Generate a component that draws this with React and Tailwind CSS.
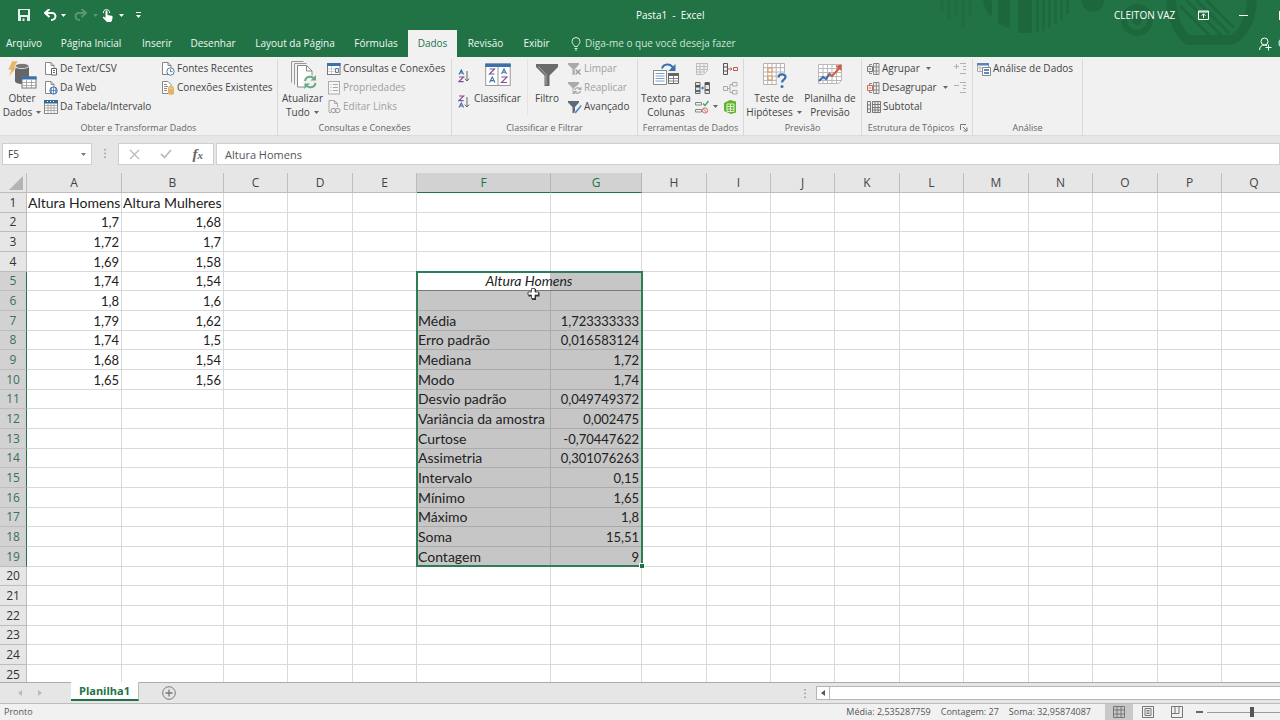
import React from "react";

const UI = "font-['Open_Sans','Noto_Sans',sans-serif]";
const CELL = "font-['Lato','Noto_Sans',sans-serif]";

/* ---------- icons ---------- */
const Caret = ({ className = "" }) => (
  <svg viewBox="0 0 5 3" className={"inline-block h-[3px] w-[5px] shrink-0 " + className}>
    <path d="M0 0h5L2.5 3z" fill="currentColor" />
  </svg>
);

function Ico({ w = 14, h = 14, children, cls = "h-3.5 w-3.5" }) {
  return (
    <svg viewBox={`0 0 ${w} ${h}`} className={"shrink-0 " + cls} fill="none">
      {children}
    </svg>
  );
}

const page = "M1.5.5h5.5l3 3v9h-8.500z";

const GetDataIcon = () => (
  <Ico w={30} h={30} cls="h-[30px] w-[30px]">
    <path d="M8 6v15c0 4 14 4 14 0V6z" fill="#666" />
    <ellipse cx="15" cy="6" rx="7" ry="2.600" fill="#777" stroke="#f1f1f1" strokeWidth=".8" />
    <path d="M5 1h6L7.500 7H10L1.500 17l2.500-7H1z" fill="#e8b765" stroke="#f1f1f1" strokeWidth=".5" />
    <rect x="15" y="17" width="14" height="11" fill="#fff" stroke="#777" />
    <path d="M14.500 16.500h15v3h-15z" fill="#3c6fae" />
    <path d="M15 22.500h14M15 25.500h14M19.500 20v8M24.500 20v8" stroke="#999" strokeWidth=".8" />
  </Ico>
);
const TextCsvIcon = () => (
  <Ico>
    <path d={page} fill="#fff" stroke="#888" />
    <path d="M7 .5v3h3" stroke="#888" />
    <path d="M7.500 6.500h5v6.500h-5z" fill="#fff" stroke="#666" />
    <path d="M9 8.500h2M9 10.500h2" stroke="#666" />
  </Ico>
);
const WebIcon = () => (
  <Ico>
    <path d={page} fill="#fff" stroke="#888" />
    <path d="M7 .5v3h3" stroke="#888" />
    <circle cx="9.500" cy="9.500" r="3.700" fill="#fff" stroke="#3c6fae" />
    <path d="M6 9.500h7M9.500 6v7M8 6.500c-1 2-1 4 0 6M11 6.500c1 2 1 4 0 6" stroke="#3c6fae" strokeWidth=".7" />
  </Ico>
);
const TableIcon = () => (
  <Ico>
    <rect x=".5" y=".5" width="13" height="13" fill="#fff" stroke="#888" />
    <path d="M0 0h14v3.500H0z" fill="#2f6b96" />
    <path d="M1 5.500h12M1 8h12M1 10.500h12M4 3.500v10M7 3.500v10M10 3.500v10" stroke="#999" strokeWidth=".8" />
    <path d="M3 1.500h1M6 1.500h1M9 1.500h1" stroke="#fff" />
  </Ico>
);
const RecentIcon = () => (
  <Ico>
    <path d={page} fill="#fff" stroke="#888" />
    <path d="M7 .5v3h3" stroke="#888" />
    <circle cx="9.500" cy="9.500" r="3.700" fill="#fff" stroke="#5577a5" />
    <path d="M9.500 7.300v2.400h2" stroke="#5577a5" />
  </Ico>
);
const ExistingIcon = () => (
  <Ico>
    <path d={page} fill="#fff" stroke="#888" />
    <path d="M3 3.500h3M3 5.500h4M3 7.500h3M3 9.500h3" stroke="#888" />
    <path d="M7 6.500c0-2 6-2 6 0v6c0 1.700-6 1.700-6 0z" fill="#e3b469" />
    <path d="M7.500 6.500c0 1.200 5 1.200 5 0" stroke="#f6dca9" strokeWidth=".7" />
  </Ico>
);
const RefreshAllIcon = () => (
  <Ico w={30} h={30} cls="h-[30px] w-[30px]">
    <path d="M3.500 22.500v-21h12M6.500 24.500v-21h12" stroke="#999" />
    <path d="M9.500 5.500h9l5.500 5.500v16H9.500z" fill="#fff" stroke="#888" />
    <path d="M18.500 5.500v5.500h5.500" stroke="#888" />
    <circle cx="22" cy="22" r="7" fill="#f1f1f1" />
    <path d="M17 21c.5-3 3-4.500 5.500-4.300 1.800.1 3 1 4 2.300M27.500 23c-.5 3-3 4.500-5.500 4.300-1.800-.1-3-1-4-2.300" stroke="#6aa888" strokeWidth="2" />
    <path d="M28 15v5.500h-5.500zM16.500 29v-5.500H22z" fill="#6aa888" />
  </Ico>
);
const QueriesIcon = () => (
  <Ico>
    <rect x=".5" y="1.500" width="12.500" height="11" fill="#fff" stroke="#777" />
    <path d="M0 1h13.500v3H0z" fill="#3c6fae" />
    <path d="M1 7h7M1 9.500h7M4.500 4v8" stroke="#bbb" strokeWidth=".7" />
    <path d="M8.500 6.500h3v4h-3z" fill="#e7eef7" stroke="#5f7fa8" />
  </Ico>
);
const PropsIcon = () => (
  <Ico>
    <rect x="1.500" y=".5" width="11" height="12.500" fill="#f7f7f7" stroke="#aaa" />
    <path d="M3.500 3.500h1M3.500 6.500h1M3.500 9.500h1M6 3.500h5M6 6.500h5M6 9.500h5" stroke="#aaa" />
  </Ico>
);
const LinksIcon = () => (
  <Ico>
    <path d="M2 12V.5h5.500l3 3V7" stroke="#aaa" />
    <path d="M7.500.5v3h3M2 12.500h2" stroke="#aaa" />
    <rect x="4" y="8.500" width="5" height="4" rx="2" stroke="#999" />
    <rect x="8" y="8.500" width="5" height="4" rx="2" stroke="#999" />
  </Ico>
);

const Glyph = ({ kind, x, y, s = 5, c }) =>
  kind === "A" ? (
    <path d={`M${x} ${y + s}L${x + s / 2} ${y}L${x + s} ${y + s}M${x + s * 0.2} ${y + s * 0.65}h${s * 0.6}`} stroke={c} strokeWidth="1.100" />
  ) : (
    <path d={`M${x} ${y}h${s}L${x} ${y + s}h${s}`} stroke={c} strokeWidth="1.100" />
  );
const SortIcon = ({ up }) => (
  <Ico w={12} h={14} cls="h-3.5 w-3">
    <Glyph kind={up ? "A" : "Z"} x={1} y={1} s={4.6} c={up ? "#3c6fae" : "#7f4f93"} />
    <Glyph kind={up ? "Z" : "A"} x={1} y={8} s={4.6} c={up ? "#7f4f93" : "#3c6fae"} />
    <path d="M9 2v10M6.800 9.600L9 12l2.200-2.400" stroke="#666" />
  </Ico>
);
const SortBigIcon = () => (
  <Ico w={26} h={24} cls="h-6 w-[26px]">
    <rect x=".7" y="1" width="24.500" height="21.500" fill="#fff" stroke="#999" />
    <path d="M.2.500h25.500v3.500H.2z" fill="#3c6fae" />
    <path d="M13 4v18.500" stroke="#999" />
    <Glyph kind="Z" x={4.500} y={6} s={5} c="#7f4f93" />
    <Glyph kind="A" x={4.500} y={14} s={5.500} c="#3c6fae" />
    <Glyph kind="A" x={16.500} y={6} s={5} c="#3c6fae" />
    <Glyph kind="Z" x={16.500} y={14} s={5.500} c="#7f4f93" />
  </Ico>
);
const FilterBigIcon = () => (
  <Ico w={24} h={24} cls="h-6 w-6">
    <path d="M1 1h22v3l-8.500 8.500V23h-5V12.500L1 4z" fill="#6b6b6b" />
    <path d="M3.500 3.500l7.500 8V22" stroke="#aaa" />
  </Ico>
);
const SmallFilter = ({ c, children }) => (
  <Ico>
    <path d="M0 1h11v1.500L7 7v6H4.500V7L0 2.500z" fill={c} />
    {children}
  </Ico>
);
const ClearIcon = () => (
  <SmallFilter c="#aaa">
    <path d="M7 7l6 6M13 7l-6 6" stroke="#f1f1f1" strokeWidth="3" />
    <path d="M7.500 7.500l5 5M12.500 7.500l-5 5" stroke="#999" strokeWidth="1.400" />
  </SmallFilter>
);
const ReapplyIcon = () => (
  <SmallFilter c="#aaa">
    <circle cx="9.500" cy="9.500" r="4.200" fill="#f1f1f1" />
    <path d="M6.800 9c.5-2.500 4-3 5.200-1M12.500 10c-.5 2.500-4 3-5.200 1" stroke="#aaa" strokeWidth="1.300" />
    <path d="M13.500 5.500V9H10zM5.800 13.500V10h3.500z" fill="#aaa" />
  </SmallFilter>
);
const AdvancedIcon = () => (
  <SmallFilter c="#5d6b76">
    <path d="M13 4.500l-6 7-1 2.500 2.500-1 5.500-7z" fill="#3c7fc0" stroke="#f1f1f1" strokeWidth=".6" />
  </SmallFilter>
);
const TextColsIcon = () => (
  <Ico w={28} h={26} cls="h-[26px] w-7">
    <path d="M1.500 8.500h13v14h-13z" fill="#fff" stroke="#888" />
    <path d="M3.500 11.500h9M3.500 14h9M3.500 16.500h9M3.500 19h9" stroke="#7da2cc" />
    <path d="M16.500 11.500h10v10h-10z" fill="#fff" stroke="#666" />
    <path d="M16 11h11v3H16z" fill="#666" />
    <path d="M17 16.500h9M17 19h9M21.500 14v7" stroke="#888" />
    <path d="M10 6.500c1.500-5 8.500-5.500 11-.5" stroke="#3c6fae" strokeWidth="2" />
    <path d="M23.500 2v7h-7z" fill="#3c6fae" />
  </Ico>
);
const FlashIcon = () => (
  <Ico>
    <path d="M1.500 1.500h11v7l-4 4h-7zM1.500 4.500h11M1.500 7.500h11M1.500 10h8M5 1.500v11M9 1.500v9" stroke="#bdbdbd" />
  </Ico>
);
const DupIcon = () => (
  <Ico w={15} cls="h-3.5 w-[15px]">
    <path d="M.5 1.500h4.500v11H.5zM10 1.500h4.500v11H10z" fill="#f4e3bb" stroke="#666" />
    <path d="M1 4h4v2.500H1zM10 1.500h4V4h-4z" fill="#4a5664" />
    <path d="M1 9h4v2H1zM10 8h4v2h-4z" fill="#3c6fae" />
    <path d="M6 7h3M7.700 5.500v3" stroke="#3c6fae" />
  </Ico>
);
const ValidIcon = () => (
  <Ico>
    <path d="M.5 2.500h6v2.500h-6zM.5 9.500h6v2.500h-6z" stroke="#888" />
    <path d="M8 3.500l2 2 3.500-4.500" stroke="#4b9b6c" strokeWidth="1.300" />
    <circle cx="10" cy="10.500" r="2.600" stroke="#d46a5c" />
    <path d="M8.200 8.800l3.600 3.600" stroke="#d46a5c" />
  </Ico>
);
const ConsolIcon = () => (
  <Ico w={15} cls="h-3.5 w-[15px]">
    <path d="M.5 1.500h4v11h-4zM.5 5h4M.5 9h4" stroke="#555" />
    <path d="M5 7h4M7.500 5.500L9 7 7.500 8.500" stroke="#c5594a" />
    <path d="M10.500 5.500h4v3h-4z" stroke="#c5594a" />
  </Ico>
);
const RelIcon = () => (
  <Ico w={15} cls="h-3.5 w-[15px]">
    <path d="M.5 5.500h4v4h-4zM9.500 1.500h4.500v3.500H9.500zM9.500 9.500h4.500v3.500H9.500zM4.500 7.500h2.500V3.500h2.500M7 7.500v4h2.500" stroke="#aaa" />
  </Ico>
);
const ModelIcon = () => (
  <Ico>
    <path d="M1 3l6-3 6 1.500v11L8 14l-7-3z" fill="#62b22f" />
    <path d="M4 4h7v7.500H4zM4 6.500h7M4 9h7M7.500 4v7.500" stroke="#e6f5d8" strokeWidth=".9" />
  </Ico>
);
const WhatIfIcon = () => (
  <Ico w={26} h={28} cls="h-7 w-[26px]">
    <path d="M2.500 2.500h21v21h-21zM2.500 6.700h21M2.500 11h21M2.500 15.200h21M2.500 19.400h21M6.700 2.500v21M11 2.500v21M15.200 2.500v21M19.400 2.500v21" fill="#fff" stroke="#b3b3b3" />
    <path d="M7 7h4v4H7zM7 15h4v4H7z" stroke="#dd8a4e" fill="#fff" />
    <path d="M16 12h9v14h-9z" fill="#f1f1f1" />
    <path d="M17.500 16.500c0-4 7-4 7-.5 0 2.500-3.500 2.800-3.500 5.500" stroke="#3c6fae" strokeWidth="2.300" />
    <circle cx="21" cy="25.500" r="1.500" fill="#3c6fae" />
  </Ico>
);
const ForecastIcon = () => (
  <Ico w={26} h={28} cls="h-7 w-[26px]">
    <path d="M1.500 3.500h23v16l-3 3h-20zM1.500 7.500h23M1.500 11.500h23M1.500 15.500h23M1.500 19.500h23M6 3.500v19M10.500 3.500v19M15 3.500v19M19.500 3.500v19" fill="#fff" stroke="#b9b9b9" />
    <path d="M2 20l4-4 3 2 4-6" stroke="#3c6fae" strokeWidth="2" />
    <path d="M12 13l3 2 7.500-8" stroke="#cf5b3c" strokeWidth="2" />
    <path d="M24.500 3.500V10l-6-5z" fill="#cf5b3c" />
  </Ico>
);
const GroupIcon = ({ c = "#777" }) => (
  <Ico w={13} cls="h-3.5 w-[13px]">
    <path d="M6.500 1.500h5.500v11H6.500zM6.500 5h5.500M6.500 9h5.500M9.300 1.500v11" stroke="#888" />
    <path d="M5 2.500H2.500v1.500M5 11.500H2.500V10" stroke="#888" />
    <path d="M.5 4.500h5v5h-5zM1.700 7h2.600" fill="#f7f7f7" stroke={c} />
  </Ico>
);
const SubtotalIcon = () => (
  <Ico w={14} cls="h-3.5 w-3.5">
    <path d="M5.500 1.500h8v11h-8zM5.500 4.500h8M5.500 7.500h8M5.500 10h8M8 1.500v11M11 1.500v11M.5 1.500h3v11h-3zM.5 5h3M.5 9h3" stroke="#777" />
  </Ico>
);
const DetailIcon = ({ plus }) => (
  <Ico w={13} cls="h-3.5 w-[13px]">
    <path d={plus ? "M0 4.500h5M2.500 2v5" : "M0 4.500h5"} stroke="#b0b0b0" />
    <path d="M6 1.500h6M9 4.500h3M9 7.500h3M6 11.500h6" stroke="#b0b0b0" />
  </Ico>
);
const AnalysisIcon = () => (
  <Ico>
    <path d="M.5 1.500h11v8h-11z" fill="#fff" stroke="#aaa" />
    <path d="M0 1h12v2.500H0z" fill="#5b83b8" />
    <path d="M1 6h4M3 4v5" stroke="#bbb" />
    <path d="M5.500 5.500h8v8h-8z" fill="#fff" stroke="#888" />
    <path d="M7 8h5M7 11h5" stroke="#2f62a6" strokeWidth="1.500" />
  </Ico>
);

/* ---------- ribbon pieces ---------- */
function Small({ icon, children, off, caret, className = "" }) {
  return (
    <button className={`flex h-[19px] items-center gap-0.5 whitespace-nowrap text-[10px] ${off ? "text-[#a0a0a0]" : "text-[#444]"} ${className}`}>
      {icon}
      <span>{children}</span>
      {caret && <Caret className="ml-1 text-[#666]" />}
    </button>
  );
}
function Big({ icon, a, b, caret, w }) {
  return (
    <button className={`flex shrink-0 flex-col items-center whitespace-nowrap text-[10px] leading-[14px] text-[#444] ${w}`}>
      <span className="flex h-8 items-center">{icon}</span>
      <span>{a}</span>
      {b && (
        <span className="flex items-center">
          {b}
          {caret && <Caret className="ml-1 text-[#666]" />}
        </span>
      )}
    </button>
  );
}
function Group({ label, w, children, launcher }) {
  return (
    <section className={`flex shrink-0 flex-col border-r border-[#d8d8d8] ${w}`} aria-label={label}>
      <div className="flex h-[61px] items-start">{children}</div>
      <div className="flex h-[15px] items-center whitespace-nowrap text-[9px] leading-[15px] text-[#666]">
        <span className="flex-1 text-center">{label}</span>
        {launcher && (
          <button aria-label="Mais opções" className="pr-1">
            <svg viewBox="0 0 8 8" className="h-2 w-2" fill="none" stroke="#777">
              <path d="M.5 6V.5H6M3 3l3.500 3.500M7 3.500V7H3.500" />
            </svg>
          </button>
        )}
      </div>
    </section>
  );
}

const TABS = [
  ["Arquivo", "w-12"],
  ["Página Inicial", "w-[86px]"],
  ["Inserir", "w-[46px]"],
  ["Desenhar", "w-[66px]"],
  ["Layout da Página", "w-[98px]"],
  ["Fórmulas", "w-16"],
  ["Dados", "w-[49px]"],
  ["Revisão", "w-[57px]"],
  ["Exibir", "w-[45px]"],
];

/* ---------- sheet data ---------- */
const COLS = [
  ["A", "w-[95px]"], ["B", "w-[102px]"], ["C", "w-[64px]"], ["D", "w-[65px]"], ["E", "w-[64px]"],
  ["F", "w-[134px]"], ["G", "w-[91px]"], ["H", "w-[65px]"], ["I", "w-[64px]"], ["J", "w-[64px]"],
  ["K", "w-[65px]"], ["L", "w-[64px]"], ["M", "w-[65px]"], ["N", "w-[64px]"], ["O", "w-[65px]"],
  ["P", "w-[64px]"], ["Q", "w-[65px]"],
];
const A = ["Altura Homens", "1,7", "1,72", "1,69", "1,74", "1,8", "1,79", "1,74", "1,68", "1,65"];
const B = ["Altura Mulheres", "1,68", "1,7", "1,58", "1,54", "1,6", "1,62", "1,5", "1,54", "1,56"];
const STATS = {
  7: ["Média", "1,723333333"],
  8: ["Erro padrão", "0,016583124"],
  9: ["Mediana", "1,72"],
  10: ["Modo", "1,74"],
  11: ["Desvio padrão", "0,049749372"],
  12: ["Variância da amostra", "0,002475"],
  13: ["Curtose", "-0,70447622"],
  14: ["Assimetria", "0,301076263"],
  15: ["Intervalo", "0,15"],
  16: ["Mínimo", "1,65"],
  17: ["Máximo", "1,8"],
  18: ["Soma", "15,51"],
  19: ["Contagem", "9"],
};
const ROWS = Array.from({ length: 25 }, (_, i) => i + 1);

function Cell({ col, row }) {
  if (col === "F" && row === 5) {
    return (
      <td colSpan={2} className="relative border-b border-r border-[#7a7a7a] bg-[linear-gradient(to_right,#fff_133px,#c6c6c6_133px)] p-0 text-center text-[14px] italic">
        Altura Homens
        <span className="pointer-events-none absolute -left-px -top-px h-[296px] w-[227px] border-2 border-[#2f7d55]">
          <span className="absolute -bottom-[3px] -right-[3px] h-[5px] w-[5px] border-l border-t border-white bg-[#217346]" />
        </span>
        <svg viewBox="0 0 13 13" className="pointer-events-none absolute left-[110px] top-[15px] h-[13px] w-[13px]">
          <path d="M5 2h4v3.500h3.500v4H9V13H5V9.500H1.500v-4H5z" fill="#333" />
          <path d="M4.500 1.500h3.500v3.500h3.500v3H8v3.500H4.500V8H1V5h3.500z" fill="#fff" stroke="#333" strokeWidth=".8" />
        </svg>
      </td>
    );
  }
  if (col === "G" && row === 5) return null;
  const sel = (col === "F" || col === "G") && row >= 6 && row <= 19;
  let text = "";
  if (col === "A") text = A[row - 1] || "";
  if (col === "B") text = B[row - 1] || "";
  if (STATS[row] && col === "F") text = STATS[row][0];
  if (STATS[row] && col === "G") text = STATS[row][1];
  const label = row === 1 || col === "F";
  return (
    <td
      className={`overflow-visible whitespace-nowrap border-b border-r py-0 ${sel ? "border-[#ababab] bg-[#c6c6c6]" : "border-[#d9d9d9]"} ${
        label ? "px-px text-left text-[14px]" : "px-0.5 text-right"
      }`}
    >
      {text}
    </td>
  );
}

export default function App() {
  return (
    <div className={`flex h-screen flex-col overflow-hidden bg-[#e6e6e6] ${UI}`}>
      <header className="relative overflow-hidden bg-[#217346] text-white">
        <svg viewBox="0 0 340 56" className="absolute right-0 top-0 h-14 w-[340px]" fill="none">
          <g fill="#1d673c">
            <path d="M0 0h4v12H0zM7 0h4v20H7zM14 0h4v15h-4zM21 0h4v28h-4zM28 0h4v17h-4z" opacity=".5" />
            <path d="M43 0h9v18c-5-5-8-11-9-18zM58 0h12v28c-5-1-9-3-12-5zM78 0h14v33H78z" />
            <path d="M96 0h3v32h-3zM102 0h3v31h-3zM108 0h3v28h-3zM114 0h3v24h-3zM120 0h3v20h-3zM126 0h3v14h-3z" opacity=".7" />
            <path d="M141 0h23c0 16-22 15-23 0z" />
          </g>
          <circle cx="197" cy="20" r="13" stroke="#1d673c" strokeWidth="6" />
          <circle cx="197" cy="20" r="5" fill="#1d673c" />
          <path d="M231 0c1 16 6 31 17 40h44c14-8 19-23 20-40" stroke="#1d673c" strokeWidth="10" />
          <path d="M246 0l36 36M256 0l33 33M266 0l28 28M240 6l30 30" stroke="#1d673c" strokeWidth="3" />
        </svg>

        <div className="relative flex h-[30px] items-center">
          <div className="flex w-[500px] items-center pl-[18px]">
            <button aria-label="Salvar">
              <svg viewBox="0 0 12 12" className="h-3 w-3">
                <path d="M0 0h12v12H0z" fill="#e4f1ea" />
                <path d="M2 1h8v5H2zM3 8h6v4H3z" fill="#217346" />
                <path d="M4.500 9.500h2V12h-2z" fill="#e4f1ea" />
              </svg>
            </button>
            <button aria-label="Desfazer" className="ml-3.5 flex items-center">
              <svg viewBox="0 0 13 12" className="h-3 w-[13px]" fill="none">
                <path d="M2 4h6c5 0 4.500 7-1 7" stroke="#fff" strokeWidth="2" />
                <path d="M5.500 0L1 4l4.500 4" stroke="#fff" strokeWidth="2" />
              </svg>
              <Caret className="ml-1" />
            </button>
            <button aria-label="Refazer" className="ml-2 flex items-center opacity-25">
              <svg viewBox="0 0 13 12" className="h-3 w-[13px]" fill="none">
                <path d="M11 4H5c-5 0-4.500 7 1 7M7.500 0L12 4 7.500 8" stroke="#fff" strokeWidth="2" />
              </svg>
              <Caret className="ml-1.5" />
            </button>
            <button aria-label="Modo de toque" className="ml-1 flex items-center">
              <svg viewBox="0 0 11 13" className="h-[13px] w-[11px]">
                <path d="M3.500 2.500c0-1.500 2-1.500 2 0V6l4 .8c1 .2 1.200.8 1.100 1.500L10 11.500 9 13H5L1 9c-.7-1 .6-1.700 1.300-1L3.500 9z" fill="#fff" />
                <path d="M1.500 4C.5-.5 8.500-.5 7.500 4" fill="none" stroke="#fff" />
              </svg>
              <Caret className="ml-1.5" />
            </button>
            <button aria-label="Personalizar" className="ml-3">
              <svg viewBox="0 0 5 6" className="h-1.5 w-[5px]" fill="#fff">
                <path d="M0 0h5v1H0zM0 3h5L2.500 6z" />
              </svg>
            </button>
          </div>
          <h1 className="flex-1 whitespace-pre pl-[136px] text-[10px]">{"Pasta1  -  Excel"}</h1>
          <div className="flex items-center text-[10px]">
            <span className="w-[64px] whitespace-nowrap">CLEITON VAZ</span>
            <button aria-label="Opções da faixa" className="ml-5">
              <svg viewBox="0 0 11 10" className="h-2.5 w-[11px]" fill="none" stroke="#fff">
                <path d="M.5 1h10v8.500H.5zM.5 2h10M5.500 8V4M3.500 5.800l2-2 2 2" />
              </svg>
            </button>
            <button aria-label="Minimizar" className="ml-[30px] h-px w-[9px] bg-white" />
            <button aria-label="Restaurar" className="-mr-2 ml-[31px] h-[9px] w-[9px] border border-white" />
          </div>
        </div>

        <nav className="relative flex h-[27px] items-stretch text-[10px]">
          {TABS.map(([t, w]) => (
            <button
              key={t}
              className={`${w} shrink-0 whitespace-nowrap text-center ${t === "Dados" ? "bg-[#f1f1f1] text-[#217346]" : "text-[#f0f8f3]"}`}
            >
              {t}
            </button>
          ))}
          <button className="ml-3 flex items-center gap-1 whitespace-nowrap text-[#cbe4d5]">
            <svg viewBox="0 0 10 14" className="h-3.5 w-2.5" fill="none" stroke="#d5eadd">
              <path d="M3.500 9.500C3.500 8 1 7 1 4.500a4 4 0 018 0C9 7 6.500 8 6.500 9.500zM3.500 11.500h3M4 13h2" />
            </svg>
            Diga-me o que você deseja fazer
          </button>
          <button className="-mr-20 ml-auto flex w-[101px] items-center gap-1.5 whitespace-nowrap">
            <svg viewBox="0 0 13 14" className="h-3.5 w-[13px] shrink-0" fill="none" stroke="#fff">
              <circle cx="5.500" cy="4.500" r="3.500" />
              <path d="M.5 13c0-3 2-5 5-5 1 0 2 .3 2.500.8M6.500 10.500h6M9.500 7.500v6" />
            </svg>
            Compartilhar
          </button>
        </nav>
      </header>

      <div className="flex overflow-hidden border-b border-[#dcdcdc] bg-[#f1f1f1] pt-[2px]">
        <Group label="Obter e Transformar Dados" w="w-[278px]">
          <Big w="w-11" icon={<GetDataIcon />} a="Obter" b="Dados" caret />
          <div className="w-[117px]">
            <Small icon={<TextCsvIcon />}>De Text/CSV</Small>
            <Small icon={<WebIcon />}>Da Web</Small>
            <Small icon={<TableIcon />}>Da Tabela/Intervalo</Small>
          </div>
          <div>
            <Small icon={<RecentIcon />}>Fontes Recentes</Small>
            <Small icon={<ExistingIcon />}>Conexões Existentes</Small>
          </div>
        </Group>
        <Group label="Consultas e Conexões" w="w-[174px]">
          <Big w="w-[49px]" icon={<RefreshAllIcon />} a="Atualizar" b="Tudo" caret />
          <div>
            <Small icon={<QueriesIcon />}>Consultas e Conexões</Small>
            <Small off icon={<PropsIcon />}>Propriedades</Small>
            <Small off icon={<LinksIcon />}>Editar Links</Small>
          </div>
        </Group>
        <Group label="Classificar e Filtrar" w="w-[186px]">
          <div className="flex w-5 flex-col items-center gap-3 pl-1 pt-2.5">
            <button aria-label="Classificar de A a Z" className="h-3.5"><SortIcon up /></button>
            <button aria-label="Classificar de Z a A" className="h-3.5"><SortIcon /></button>
          </div>
          <Big w="w-[51px]" icon={<SortBigIcon />} a="Classificar" />
          <div className="ml-1 h-14 w-px bg-[#e2e2e2]" />
          <Big w="w-[38px]" icon={<FilterBigIcon />} a="Filtro" />
          <div className="pl-0.5">
            <Small off icon={<ClearIcon />}>Limpar</Small>
            <Small off icon={<ReapplyIcon />}>Reaplicar</Small>
            <Small icon={<AdvancedIcon />}>Avançado</Small>
          </div>
        </Group>
        <Group label="Ferramentas de Dados" w="w-[106px]">
          <Big w="w-14" icon={<TextColsIcon />} a="Texto para" b="Colunas" />
          <div className="flex w-[29px] flex-col pl-px text-[#666]">
            <button aria-label="Preenchimento relâmpago" className="flex h-[19px] items-center"><FlashIcon /></button>
            <button aria-label="Remover duplicadas" className="flex h-[19px] items-center"><DupIcon /></button>
            <button aria-label="Validação de dados" className="flex h-[19px] items-center gap-1"><ValidIcon /><Caret /></button>
          </div>
          <div className="flex flex-col">
            <button aria-label="Consolidar" className="flex h-[19px] items-center"><ConsolIcon /></button>
            <button aria-label="Relações" className="flex h-[19px] items-center"><RelIcon /></button>
            <button aria-label="Modelo de dados" className="flex h-[19px] items-center"><ModelIcon /></button>
          </div>
        </Group>
        <Group label="Previsão" w="w-[118px]">
          <Big w="w-[60px]" icon={<WhatIfIcon />} a="Teste de" b="Hipóteses" caret />
          <Big w="w-[52px]" icon={<ForecastIcon />} a="Planilha de" b="Previsão" />
        </Group>
        <Group label="Estrutura de Tópicos" w="w-[111px]" launcher>
          <div className="w-[92px] pl-[5px]">
            <Small icon={<GroupIcon />} caret>Agrupar</Small>
            <Small icon={<GroupIcon c="#cf6a45" />} caret>Desagrupar</Small>
            <Small icon={<SubtotalIcon />}>Subtotal</Small>
          </div>
          <div>
            <button aria-label="Mostrar detalhe" className="flex h-[19px] items-center"><DetailIcon plus /></button>
            <button aria-label="Ocultar detalhe" className="flex h-[19px] items-center"><DetailIcon /></button>
          </div>
        </Group>
        <Group label="Análise" w="w-[110px]">
          <Small className="ml-1" icon={<AnalysisIcon />}>Análise de Dados</Small>
        </Group>
      </div>

      <div className="flex h-[29px] shrink-0 items-end pl-0.5">
        <div className="flex h-[22px] w-[90px] items-center border border-[#cfcfcf] bg-white px-[5px]">
          <input aria-label="Caixa de nome" defaultValue="F5" className="w-full min-w-0 bg-transparent text-[10px] text-[#444] outline-none" />
          <Caret className="text-[#777]" />
        </div>
        <svg viewBox="0 0 2 9" className="mx-3 mb-[7px] h-[9px] w-0.5" fill="#aaa">
          <path d="M0 0h2v1.500H0zM0 3.700h2v1.500H0zM0 7.400h2v1.500H0z" />
        </svg>
        <div className="flex h-[22px] w-24 items-center justify-around border border-[#cfcfcf] bg-white">
          <button aria-label="Cancelar">
            <svg viewBox="0 0 11 11" className="h-[11px] w-[11px]" stroke="#bbb" strokeWidth="1.300"><path d="M1 1l9 9M10 1l-9 9" /></svg>
          </button>
          <button aria-label="Confirmar">
            <svg viewBox="0 0 12 10" className="h-2.5 w-3" fill="none" stroke="#bbb" strokeWidth="1.800"><path d="M1 5l3.500 3.500L11 1" /></svg>
          </button>
          <button aria-label="Inserir função" className="font-['Liberation_Serif',serif] text-[15px] font-bold italic leading-none text-[#666]">
            f<span className="text-[11px]">x</span>
          </button>
        </div>
        <input aria-label="Barra de fórmulas" defaultValue="Altura Homens" className="ml-0.5 h-[22px] min-w-0 flex-1 border border-[#cfcfcf] bg-white px-2 text-[11px] text-[#555] outline-none" />
      </div>

      <main className="mt-2 min-h-0 flex-1 overflow-hidden border-b border-[#ababab] bg-white">
        <table className={`w-[1287px] table-fixed border-separate border-spacing-0 text-[13px] leading-[18px] text-[#222] ${CELL}`}>
          <thead>
            <tr className={`h-5 bg-[#e6e6e6] text-[12px] text-[#444] ${UI}`}>
              <th className="w-[27px] border-b border-r border-[#bdbdbd] p-0">
                <svg viewBox="0 0 14 14" className="ml-[9px] h-3.5 w-3.5"><path d="M14 0v14H0z" fill="#b4b4b4" /></svg>
              </th>
              {COLS.map(([c, w]) => (
                <th
                  key={c}
                  className={`${w} border-b border-r p-0 font-normal ${c === "F" || c === "G" ? "border-b-[#217346] border-r-[#b5b5b5] bg-[#d2d2d2] text-[#217346]" : "border-[#bdbdbd]"}`}
                >
                  {c}
                </th>
              ))}
            </tr>
          </thead>
          <tbody>
            {ROWS.map((r) => (
              <tr key={r} className={r % 3 === 2 ? "h-[19px]" : "h-5"}>
                <th
                  className={`border-b border-r p-0 text-center text-[12px] font-normal ${UI} ${r >= 5 && r <= 19 ? "border-b-[#bdbdbd] border-r-[#217346] bg-[#d2d2d2] text-[#3d6f57]" : "border-[#bdbdbd] bg-[#e6e6e6] text-[#333]"}`}
                >
                  {r}
                </th>
                {COLS.map(([c]) => (
                  <Cell key={c} col={c} row={r} />
                ))}
              </tr>
            ))}
          </tbody>
        </table>
      </main>

      <div className="flex h-5 shrink-0 items-center">
        <div className="flex w-[71px] gap-4 pl-[18px] text-[#bbb]">
          <button aria-label="Planilha anterior"><svg viewBox="0 0 4 6" className="h-1.5 w-1"><path d="M4 0v6L0 3z" fill="currentColor" /></svg></button>
          <button aria-label="Próxima planilha"><svg viewBox="0 0 4 6" className="h-1.5 w-1"><path d="M0 0v6l4-3z" fill="currentColor" /></svg></button>
        </div>
        <button className="-mt-px h-[19px] w-[68px] self-start border-b-2 border-r border-b-[#217346] border-r-[#bbb] bg-white text-[11px] font-bold leading-4 text-[#217346]">
          Planilha1
        </button>
        <button aria-label="Nova planilha" className="ml-[23px]">
          <svg viewBox="0 0 14 14" className="h-3.5 w-3.5" fill="none" stroke="#777"><circle cx="7" cy="7" r="6.300" /><path d="M7 3.500v7M3.500 7h7" strokeWidth="1.300" /></svg>
        </button>
        <div className="ml-auto flex w-[38%] items-center">
          <svg viewBox="0 0 2 9" className="ml-2.5 mr-2.5 h-[9px] w-0.5" fill="#aaa">
            <path d="M0 0h2v1.500H0zM0 3.700h2v1.500H0zM0 7.400h2v1.500H0z" />
          </svg>
          <button aria-label="Rolar para a esquerda" className="flex h-3.5 w-3.5 items-center justify-center border border-[#b5b5b5] bg-white">
            <svg viewBox="0 0 4 6" className="h-1.5 w-1"><path d="M4 0v6L0 3z" fill="#555" /></svg>
          </button>
          <div className="h-3.5 flex-1 border-y border-[#b5b5b5] bg-white" />
        </div>
      </div>

      <footer className="flex h-[17px] shrink-0 items-center overflow-hidden whitespace-nowrap border-t border-[#bcbcbc] bg-[#f1f1f1] pl-1 text-[9px] text-[#555]">
        <span>Pronto</span>
        <div className="-mr-4 ml-auto flex items-center">
          <div className="flex gap-2.5 pr-3.5">
            <span>Média: 2,535287759</span>
            <span>Contagem: 27</span>
            <span>Soma: 32,95874087</span>
          </div>
          <button aria-label="Normal" className="flex h-4 w-7 items-center justify-center bg-[#c8c8c8]">
            <svg viewBox="0 0 12 12" className="h-3 w-3" fill="none" stroke="#777"><path d="M.5.5h11v11H.5zM.5 4h11M.5 8h11M4 .5v11M8 .5v11" /></svg>
          </button>
          <button aria-label="Layout da página" className="flex h-4 w-[29px] items-center justify-center">
            <svg viewBox="0 0 12 12" className="h-3 w-3" fill="none" stroke="#777"><path d="M.5.5h11v11H.5zM3 2.500h6v7H3zM4.500 4.500h3M4.500 6h3M4.500 7.500h3" /></svg>
          </button>
          <button aria-label="Quebra de página" className="flex h-4 w-[30px] items-center justify-center">
            <svg viewBox="0 0 12 12" className="h-3 w-3" fill="none" stroke="#777"><path d="M.5.500h11v11H.5zM4 .5v7h4v-7M.5 7.500H4" /></svg>
          </button>
          <button aria-label="Reduzir zoom" className="ml-1 mr-1 h-0.5 w-[7px] bg-[#666]" />
          <input
            type="range"
            aria-label="Zoom"
            defaultValue="50"
            className="h-px w-[89px] appearance-none bg-[#999] [&::-webkit-slider-thumb]:h-2.5 [&::-webkit-slider-thumb]:w-1 [&::-webkit-slider-thumb]:appearance-none [&::-webkit-slider-thumb]:bg-[#555]"
          />
        </div>
      </footer>
    </div>
  );
}
